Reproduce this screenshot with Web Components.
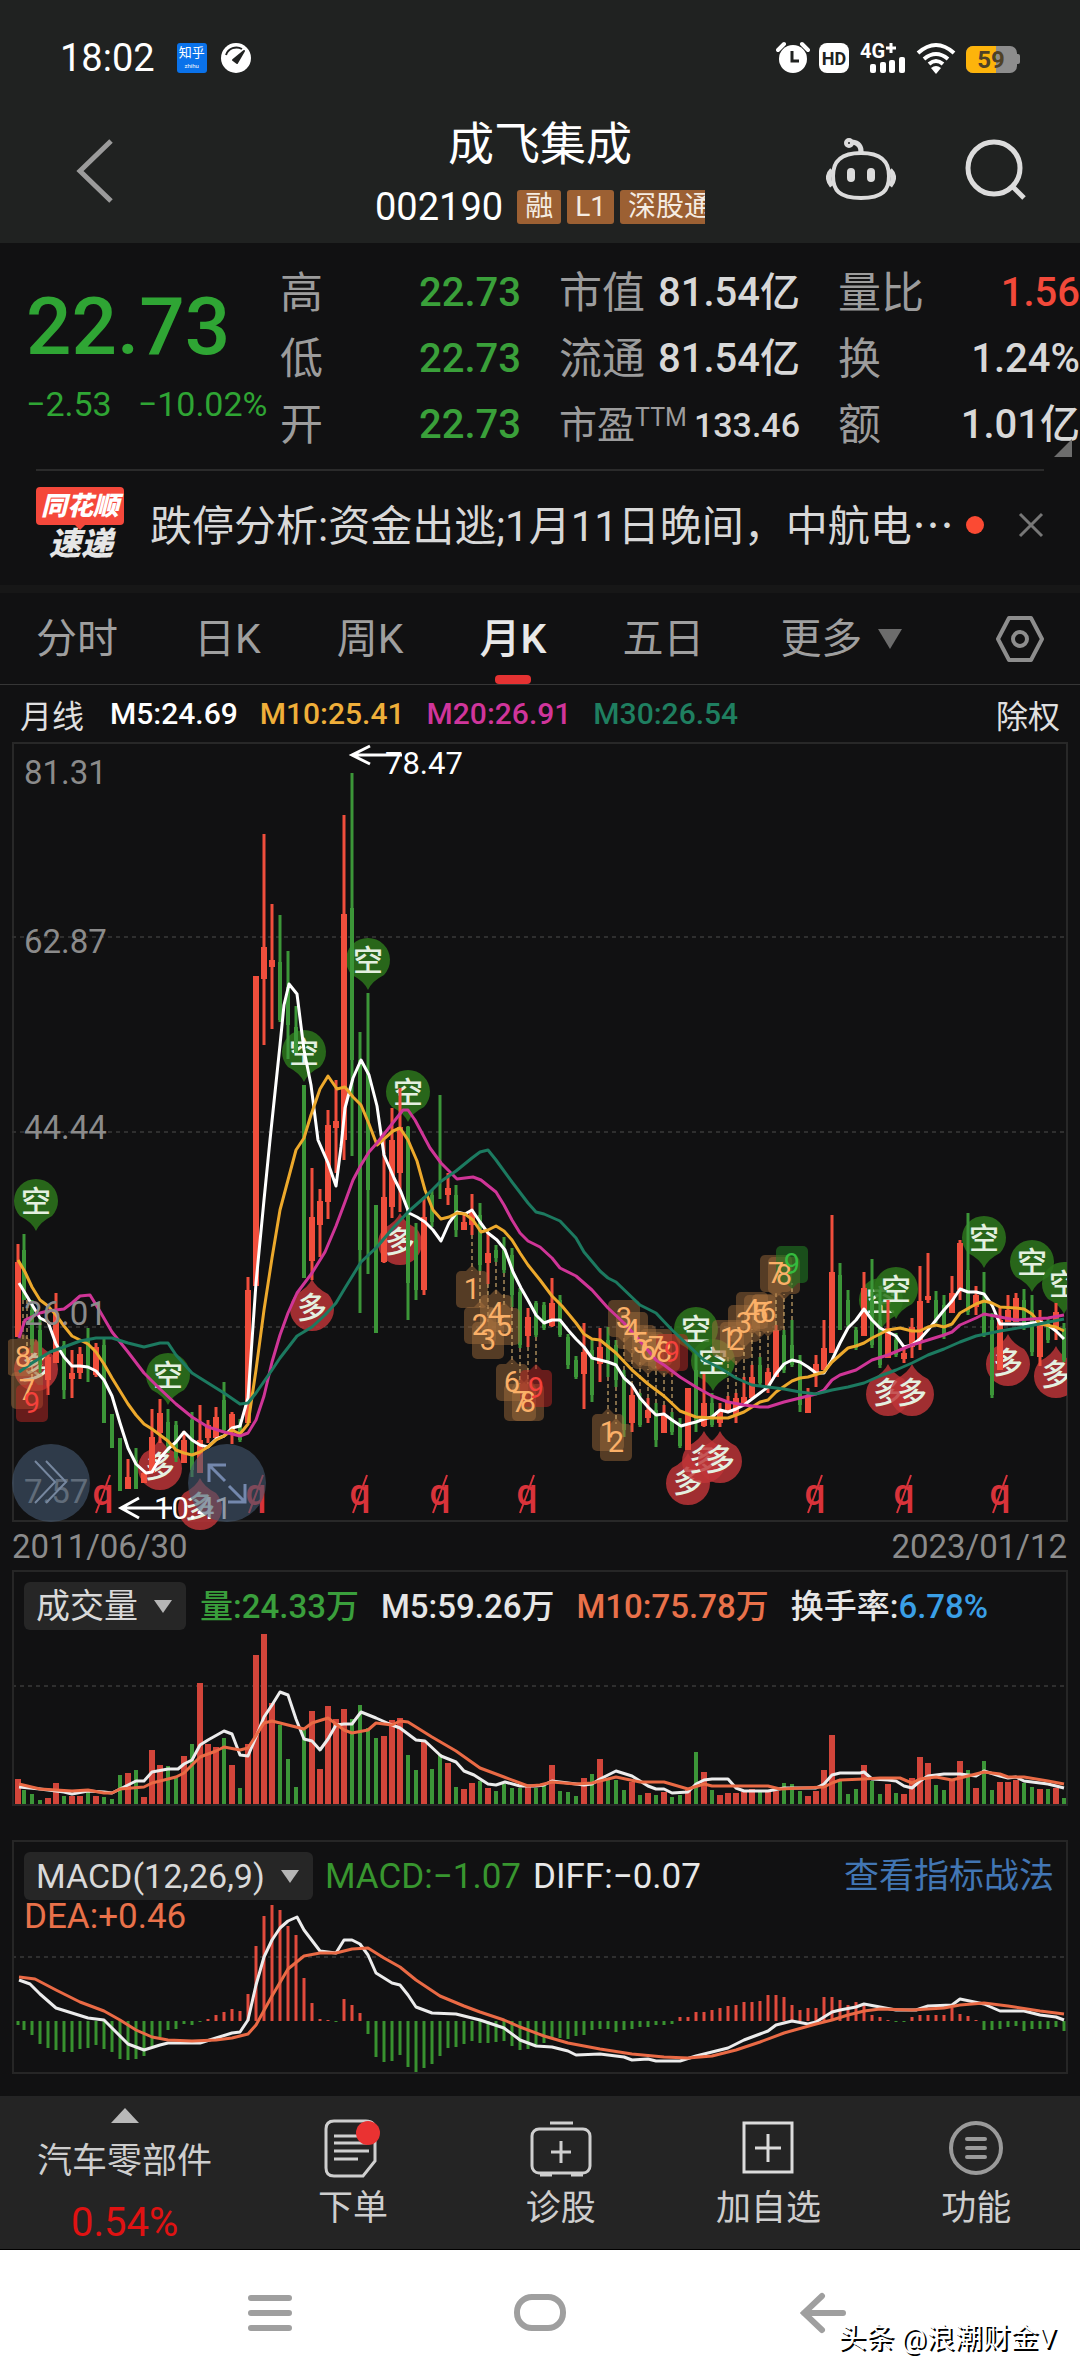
<!DOCTYPE html>
<html lang="zh-CN">
<head>
<meta charset="utf-8">
<meta name="viewport" content="width=device-width, initial-scale=1">
<title>成飞集成 002190</title>
<style>
  body {
    margin: 0;
    background: #111112;
    color: #d8d8d8;
    font-family: Roboto, "Noto Sans CJK SC", sans-serif;
  }
</style>
</head>
<body>
<stock-page></stock-page>

<script>
const RESET = `
  * { box-sizing: border-box; }
  h1, button, select { margin: 0; padding: 0; }
  button, select { font: inherit; color: inherit; background: none; border: 0; cursor: pointer; }
  a { color: inherit; text-decoration: none; }
  svg { display: block; }
`;

class BaseElement extends HTMLElement {
  connectedCallback() {
    if (this.shadowRoot) return;
    this.attachShadow({ mode: 'open' });
    this.shadowRoot.innerHTML = `<style>${RESET}${this.styles()}</style>${this.render()}`;
  }
  styles() { return ':host { display: block; }'; }
  render() { return '<slot></slot>'; }
}

/* ---------- status bar ---------- */
class StatusBar extends BaseElement {
  styles() {
    return `
      :host { display: flex; justify-content: space-between; align-items: center;
        height: 116px; padding: 0 60px; background: #202221; color: #fff; }
      .side { display: flex; align-items: center; gap: 14px; }
      .time { font-size: 38px; line-height: 48px; margin-right: 8px; }
      .app { width: 30px; height: 30px; border-radius: 3px; background: #0a72ea;
        font-size: 13px; line-height: 20px; text-align: center; }
      .app small { display: block; font-size: 6px; line-height: 6px; }
      text { font-family: Roboto, sans-serif; font-weight: 700; }
    `;
  }
  render() {
    return `
      <div class="side">
        <span class="time">18:02</span>
        <span class="app">知乎<small>zhihu</small></span>
        <svg width="30" height="30" viewBox="0 0 30 30">
          <circle cx="15" cy="15" r="15" fill="#fff"/>
          <path d="M5 12a11 11 0 0 1 16-6" fill="none" stroke="#202221" stroke-width="2"/>
          <path d="M23 8l-7 12-4-3z" fill="#202221" stroke="#202221" stroke-width="2" stroke-linejoin="round"/>
        </svg>
      </div>
      <svg width="244" height="48" viewBox="0 -8 244 48">
        <g fill="#fff">
          <circle cx="17" cy="17" r="14"/>
          <path d="M2 8l6-6M32 8l-6-6" stroke="#fff" stroke-width="4" stroke-linecap="round"/>
          <path d="M16 9v10h7" fill="none" stroke="#202221" stroke-width="3"/>
          <rect x="43" y="1" width="30" height="30" rx="8"/>
          <text x="58" y="23" text-anchor="middle" font-size="18" fill="#202221">HD</text>
          <text x="84" y="16" font-size="20">4G</text>
          <path d="M110 6h10M115 1v10" stroke="#fff" stroke-width="3"/>
          <rect x="94" y="22" width="6" height="9" rx="2"/>
          <rect x="104" y="20" width="6" height="11" rx="2"/>
          <rect x="113" y="18" width="6" height="13" rx="2"/>
          <rect x="123" y="15" width="6" height="16" rx="2"/>
          <path d="M142 11q18-16 36 0M148 17q12-10 24 0M153 22q7-6 14 0" fill="none" stroke="#fff" stroke-width="4"/>
          <path d="M155 26q5-4 10 0l-5 6z"/>
          <rect x="190" y="4" width="51" height="27" rx="7" fill="#8d8d8d"/>
          <path d="M197 4h23v27h-23a7 7 0 0 1-7-7V11a7 7 0 0 1 7-7z" fill="#fdb40b"/>
          <path d="M241 12h1a2 2 0 0 1 2 2v6a2 2 0 0 1-2 2h-1z" fill="#8d8d8d"/>
          <text x="215" y="26" text-anchor="middle" font-size="24" fill="#4f4126">59</text>
        </g>
      </svg>
    `;
  }
}

/* ---------- title bar ---------- */
class StockHeader extends BaseElement {
  styles() {
    return `
      :host { display: grid; grid-template-columns: 1fr 330px 1fr; align-items: start;
        height: 127px; padding: 0 54px; background: #202221; color: #fff; }
      .title { text-align: center; }
      h1 { font-size: 46px; line-height: 56px; font-weight: 400; }
      .code { display: flex; align-items: center; gap: 6px; overflow: hidden;
        font-size: 38px; line-height: 70px; white-space: nowrap; }
      .code span { margin-right: 8px; }
      ::slotted(i) { flex: none; padding: 0 8px; font-style: normal; font-size: 28px; line-height: 34px;
        border-radius: 3px; background: #9c6033; color: #f5ece2; }
      .back { padding: 22px 0 0 20px; }
      .right { display: flex; justify-content: flex-end; gap: 68px; padding-top: 20px; }
    `;
  }
  render() {
    return `
      <button class="back" aria-label="返回"><svg width="44" height="66" viewBox="0 0 44 66">
        <path d="M37 3L6 33l31 30" fill="none" stroke="#9b9b9b" stroke-width="5"/></svg></button>
      <div class="title">
        <h1>${this.getAttribute('name')}</h1>
        <div class="code"><span>${this.getAttribute('code')}</span><slot></slot></div>
      </div>
      <div class="right">
        <button aria-label="智能助手"><svg width="70" height="66" viewBox="0 0 70 66" fill="none" stroke="#dcdcdc" stroke-width="4">
          <path d="M35 17C56 17 63 26 63 40S57 62 35 62 7 54 7 40s7-23 28-23z"/>
          <path d="M6 34q-7 7 0 16M64 34q7 7 0 16" stroke-width="5"/>
          <path d="M35 17q1-10-9-11" stroke-width="5"/><circle cx="23" cy="7" r="3"/>
          <path d="M25 36v6M45 36v6" stroke-width="8" stroke-linecap="round"/></svg></button>
        <button aria-label="搜索"><svg width="62" height="66" viewBox="0 0 62 66" fill="none" stroke="#dcdcdc" stroke-width="5">
          <circle cx="30" cy="32" r="26"/><path d="M48 50l12 12"/></svg></button>
      </div>
    `;
  }
}

/* ---------- quote ---------- */
class QuoteItem extends BaseElement {
  styles() {
    return `
      :host { display: flex; justify-content: space-between; align-items: center; white-space: nowrap;
        font-size: 40px; line-height: 66px; }
      .label { font-size: 43px; color: #9c9c9c; }
      .value { font-weight: 500; }
      :host([color=green]) .value { color: #3aa03a; }
      :host([color=red]) .value { color: #f2493a; }
      :host([small]) { font-size: 34px; }
      :host([small]) .label { font-size: 38px; }
    `;
  }
  render() {
    return `<span class="label"><slot name="label"></slot></span><span class="value"><slot></slot></span>`;
  }
}

class QuotePanel extends BaseElement {
  styles() {
    return `
      :host { display: grid; grid-template-columns: 216px 241px 241px 1fr; column-gap: 38px;
        height: 226px; padding: 17px 0 0 26px; position: relative; }
      .now { color: #2fa534; font-weight: 500; }
      .price { font-size: 80px; line-height: 94px; margin-top: 20px; }
      .diff { display: flex; gap: 26px; font-size: 34px; line-height: 48px; font-weight: 400; white-space: nowrap; margin-top: 6px; }
      sup { font-size: 25px; line-height: 25px; vertical-align: 12px; }
      .corner { position: absolute; right: 8px; bottom: 12px; }
    `;
  }
  render() {
    return `
      <div class="now">
        <div class="price">22.73</div>
        <div class="diff"><span>−2.53</span><span>−10.02%</span></div>
      </div>
      <div>
        <quote-item color="green"><span slot="label">高</span>22.73</quote-item>
        <quote-item color="green"><span slot="label">低</span>22.73</quote-item>
        <quote-item color="green"><span slot="label">开</span>22.73</quote-item>
      </div>
      <div>
        <quote-item><span slot="label">市值</span>81.54亿</quote-item>
        <quote-item><span slot="label">流通</span>81.54亿</quote-item>
        <quote-item small><span slot="label">市盈<sup>TTM</sup></span>133.46</quote-item>
      </div>
      <div>
        <quote-item color="red"><span slot="label">量比</span>1.56</quote-item>
        <quote-item><span slot="label">换</span>1.24%</quote-item>
        <quote-item><span slot="label">额</span>1.01亿</quote-item>
      </div>
      <svg class="corner" width="18" height="18"><path d="M18 0v18H0z" fill="#6d6d6d"/></svg>
    `;
  }
}

/* ---------- news strip ---------- */
class NewsStrip extends BaseElement {
  styles() {
    return `
      :host { display: flex; align-items: center; height: 116px; margin: 0 36px; padding-bottom: 6px;
        border-top: 2px solid #2b2b2b; }
      .badge { position: relative; width: 90px; text-align: center; font-style: italic; font-weight: 900; }
      .badge b { display: block; background: #f5483b; color: #fff; border-radius: 4px; margin-right: 2px;
        font-size: 26px; line-height: 38px; }
      .badge em { display: block; color: #e6e6e6; font-size: 32px; line-height: 38px; }
      .badge svg { position: absolute; left: 38px; top: 37px; }
      a { flex: 1; min-width: 0; margin-left: 24px; font-size: 42px; line-height: 60px;
        white-space: nowrap; }
      .more { font-family: "Noto Sans CJK SC", sans-serif; }
      .dot { flex: none; width: 18px; height: 18px; border-radius: 50%; background: #fb4a33; margin-right: 34px; }
    `;
  }
  render() {
    return `
      <div class="badge"><b>同花顺</b><svg width="12" height="6"><path d="M0 0h12L6 6z" fill="#f5483b"/></svg><em>速递</em></div>
      <a href="#news"><slot></slot><span class="more">…</span></a>
      <span class="dot"></span>
      <button aria-label="关闭"><svg width="26" height="26"><path d="M2 2l22 22M24 2L2 24" stroke="#777" stroke-width="3"/></svg></button>
    `;
  }
}

/* ---------- period tabs ---------- */
class PeriodTabs extends BaseElement {
  styles() {
    return `
      :host { display: flex; align-items: stretch; gap: 76px; height: 100px; padding: 0 36px;
        border-top: 8px solid #171717; border-bottom: 1px solid #363636; color: #9f9f9f; }
      button { position: relative; font-size: 41px; line-height: 60px; white-space: nowrap; }
      .on { color: #e8e8e8; font-weight: 500; }
      .on::after { content: ''; position: absolute; left: 50%; bottom: 0; width: 36px; height: 9px;
        margin-left: -18px; border-radius: 4px; background: #e53232; }
      .more { display: flex; align-items: center; gap: 16px; }
      .set { margin-left: auto; }
    `;
  }
  render() {
    const tab = (t, on) => `<button${on ? ' class="on" aria-current="true"' : ''}>${t}</button>`;
    return `
      ${tab('分时')}${tab('日K')}${tab('周K')}${tab('月K', true)}${tab('五日')}
      <button class="more">更多<svg width="24" height="20"><path d="M0 0h24L12 20z" fill="#6c6c6c"/></svg></button>
      <button class="set" aria-label="设置"><svg width="48" height="48" viewBox="0 0 48 48" fill="none" stroke="#8d8d8d" stroke-width="4">
        <path d="M13 3h22l11 21-11 21H13L2 24z" stroke-linejoin="round"/><circle cx="24" cy="24" r="7"/></svg></button>
    `;
  }
}

class MaLegend extends BaseElement {
  styles() {
    return `
      :host { display: flex; align-items: center; gap: 22px; height: 57px; padding: 0 20px;
        font-size: 30px; font-weight: 500; white-space: nowrap; }
      .plain { font-size: 32px; font-weight: 400; color: #e0e0e0; }
      .start { margin-right: 4px; }
      .end { margin-left: auto; }
    `;
  }
  render() {
    return `
      <span class="plain start">月线</span>
      <span style="color:#fff">M5:24.69</span>
      <span style="color:#efaf3a">M10:25.41</span>
      <span style="color:#d0359b">M20:26.91</span>
      <span style="color:#1f7f60">M30:26.54</span>
      <span class="plain end">除权</span>
    `;
  }
}

/* ---------- chart data: one entry per month ---------- */
const x = (i) => 16 + i * 8 + (i === 0 ? 2 : 0);
const RED = '#f04e3c';
const GREEN = '#3c9638';

// colour, high, body top, body bottom, low
const CANDLES = `
r 1244 1262 1337 1337|g 1234 1250 1300 1300|g 1300 1310 1345 1353|g 1318 1330 1365 1373|r 1353 1357 1380 1395|r 1293 1313 1363 1363
g 1341 1345 1390 1399|r 1350 1373 1379 1398|r 1347 1354 1373 1379|g 1328 1340 1366 1382|r 1343 1347 1375 1377|g 1337 1345 1423 1423
g 1414 1414 1448 1448|g 1438 1438 1491 1491|r 1459 1477 1489 1489|g 1448 1460 1489 1489|r 1470 1473 1483 1483|r 1409 1437 1473 1473
r 1399 1413 1433 1443|g 1409 1422 1446 1453|g 1421 1425 1458 1462|r 1431 1440 1463 1463|g 1412 1420 1470 1477|r 1405 1440 1473 1473
r 1420 1425 1438 1443|r 1407 1417 1438 1438|g 1382 1400 1430 1433|r 1412 1414 1430 1444|g 1419 1425 1440 1442|r 1277 1290 1423 1423
r 976 976 1286 1286|r 834 947 979 1045|r 904 960 967 1029|g 915 962 1020 1022|g 951 987 1025 1059|g 1006 1027 1053 1053
g 1085 1085 1278 1278|r 1168 1217 1261 1280|r 1189 1201 1225 1257|r 1110 1125 1202 1219|r 1080 1121 1128 1173|r 815 914 1140 1160
g 773 908 1060 1156|g 1032 1060 1250 1313|g 993 1073 1190 1274|g 1205 1205 1333 1333|r 1140 1197 1262 1263|r 1108 1140 1207 1218
r 1088 1127 1173 1212|g 1126 1127 1283 1320|g 1223 1240 1290 1300|r 1197 1217 1290 1295|g 1190 1195 1222 1227|g 1095 1199 1199 1199
r 1173 1188 1195 1205|g 1185 1195 1230 1237|r 1213 1222 1230 1230|r 1194 1212 1225 1235|g 1203 1215 1265 1271|r 1233 1253 1263 1284
g 1245 1250 1258 1262|g 1237 1250 1270 1273|g 1248 1255 1295 1307|g 1288 1292 1345 1348|r 1308 1317 1336 1347|g 1301 1303 1335 1337
g 1302 1305 1328 1330|r 1278 1303 1326 1327|g 1295 1300 1335 1337|g 1334 1337 1365 1369|g 1356 1360 1377 1379|r 1323 1352 1374 1409
g 1340 1350 1395 1402|r 1328 1347 1364 1382|g 1327 1340 1360 1377|g 1340 1345 1380 1387|g 1370 1375 1430 1437|r 1385 1395 1423 1432
g 1393 1398 1425 1427|r 1398 1410 1418 1423|g 1403 1410 1440 1447|r 1405 1415 1433 1433|g 1412 1418 1432 1435|g 1418 1425 1446 1448
r 1388 1388 1450 1450|g 1353 1370 1420 1432|r 1374 1403 1426 1427|g 1393 1403 1425 1427|r 1403 1412 1423 1427|r 1396 1402 1412 1412
r 1393 1398 1415 1423|r 1377 1397 1403 1403|r 1365 1377 1398 1398|g 1357 1365 1383 1387|r 1368 1372 1387 1393|r 1325 1330 1377 1377
g 1330 1335 1370 1373|g 1320 1345 1365 1367|g 1355 1360 1405 1412|r 1388 1397 1413 1413|r 1355 1364 1374 1387|r 1320 1348 1370 1370
r 1215 1272 1353 1353|g 1263 1275 1330 1330|g 1290 1300 1325 1327|g 1327 1330 1348 1350|r 1272 1288 1336 1336|g 1259 1300 1345 1348
g 1290 1320 1365 1368|r 1300 1328 1358 1358|g 1333 1340 1355 1357|r 1345 1353 1359 1363|r 1318 1327 1347 1358|r 1266 1301 1340 1350
r 1253 1296 1300 1303|g 1291 1300 1320 1323|g 1295 1305 1335 1339|r 1276 1293 1313 1313|r 1240 1243 1290 1300|g 1213 1270 1312 1315
r 1286 1295 1307 1315|g 1272 1300 1335 1337|g 1313 1320 1395 1398|r 1307 1320 1370 1370|r 1295 1310 1322 1322|r 1293 1298 1322 1322
g 1289 1300 1328 1330|g 1295 1310 1352 1356|r 1310 1320 1357 1366|g 1317 1322 1340 1343|r 1303 1312 1330 1340|g 1323 1328 1360 1362
`.trim().split(/[|\n]/).map((s) => s.split(' ').map((v, i) => (i ? +v : v)));

const VOLUME = [25, 14, 10, 4, 6, 21, 8, 8, 8, 12, 8, 7, 5, 29, 31, 34, 7, 54, 39, 38, 28, 48, 60, 121, 60, 57, 66, 39, 16, 60,
  149, 170, 101, 79, 45, 17, 74, 93, 35, 98, 85, 95, 85, 99, 76, 66, 68, 84, 86, 49, 34, 62, 35, 50, 41, 17, 15, 21, 23, 16,
  13, 20, 16, 16, 17, 16, 18, 39, 13, 12, 8, 26, 30, 45, 24, 24, 14, 22, 9, 11, 9, 12, 7, 9, 14, 52, 32, 14, 9, 11,
  11, 12, 15, 12, 12, 13, 21, 20, 13, 8, 13, 34, 69, 24, 10, 15, 39, 23, 10, 20, 11, 10, 26, 47, 41, 19, 14, 25, 43, 34,
  16, 43, 14, 22, 22, 24, 21, 17, 15, 15, 16, 6];

const MACD = [-4, -9, -14, -23, -27, -29, -31, -31, -28, -27, -24, -28, -31, -38, -39, -38, -35, -25, -16, -9, -8, -3, -4, -1,
  2, 6, 9, 12, 10, 27, 75, 105, 116, 111, 95, 86, 43, 18, 2, 1, -1, 22, 16, 8, -13, -36, -41, -40, -34, -46, -52, -47, -43,
  -35, -27, -26, -23, -20, -22, -22, -21, -20, -25, -29, -28, -25, -22, -18, -17, -18, -15, -14, -9, -8, -8, -11, -9, -8, -6,
  -6, -4, -4, -3, 4, 4, 9, 9, 11, 13, 15, 16, 19, 19, 20, 26, 26, 24, 16, 11, 13, 13, 24, 24, 21, 16, 19, 16, 6, 4, 1, -1,
  -1, 4, 6, 6, 6, 6, 13, 7, 5, 1, -9, -9, -8, -6, -5, -10, -8, -8, -8, -6, -10];

const line = (points, color, w = 3) =>
  `<polyline points="${points}" fill="none" stroke="${color}" stroke-width="${w}" stroke-linejoin="round"/>`;
const dashed = (y) => `<path d="M12 ${y}H1067" stroke="#2f2f2f" stroke-width="2" stroke-dasharray="4 4"/>`;

/* ---------- candlestick chart ---------- */
const SHORTS = [[36, 1202], [168, 1376], [304, 1053], [368, 961], [408, 1093], [696, 1330], [713, 1362],
  [881, 1301], [896, 1290], [984, 1239], [1032, 1263], [1064, 1285]];
const LONGS = [[36, 1368], [160, 1467], [200, 1507], [312, 1308], [400, 1242], [688, 1482], [704, 1460], [720, 1460],
  [888, 1393], [912, 1393], [1008, 1363], [1056, 1375]];
// x, y, count, side of the candle, tone
const COUNTS = [[23, 1357, 8, 'below'], [27, 1390, 7, 'below'], [32, 1403, 9, 'below', 'red'],
  [472, 1289, 1, 'below'], [480, 1325, 2, 'below'], [488, 1340, 3, 'below'], [496, 1313, 4, 'below'], [504, 1326, 5, 'below'],
  [512, 1382, 6, 'below'], [520, 1402, 7, 'below'], [528, 1402, 8, 'below'], [536, 1388, 9, 'below', 'red'],
  [608, 1432, 1, 'below'], [616, 1442, 2, 'below'],
  [624, 1318, 3, 'above'], [632, 1330, 4, 'above'], [640, 1343, 5, 'above'], [648, 1350, 6, 'above'],
  [656, 1347, 7, 'above'], [664, 1352, 8, 'above'], [672, 1352, 9, 'above', 'red'],
  [728, 1338, 1, 'above'], [736, 1340, 2, 'above'], [744, 1323, 3, 'above'], [752, 1310, 4, 'above'],
  [760, 1313, 5, 'above'], [768, 1312, 6, 'above'],
  [776, 1273, 7, 'above'], [784, 1275, 8, 'above'], [792, 1264, 9, 'above', 'green']];
const TONES = {
  plain: ['rgba(168, 112, 62, .45)', '#fbb068'],
  red: ['rgba(190, 40, 36, .5)', '#f5413c'],
  green: ['rgba(34, 120, 34, .6)', '#35bb3e'],
};

class KChart extends BaseElement {
  styles() {
    return `
      :host { display: block; position: relative; }
      svg.chart { width: 100%; height: auto; }
      text { font-family: Roboto, "Noto Sans CJK SC", sans-serif; }
      .axis { fill: #8b8b8b; font-size: 33px; }
      .note { fill: #fff; font-size: 31px; }
      .pin { font-size: 30px; font-weight: 500; text-anchor: middle; fill: #e4f0e0; }
      .num { font-size: 29px; text-anchor: middle; }
      button { position: absolute; bottom: 48px; width: 78px; height: 78px; border-radius: 50%;
        background: rgba(68, 88, 112, .6); }
      button svg { width: 78px; height: 78px; }
      .forward { left: 12px; }
      .expand { left: 188px; }
    `;
  }
  pin([cx, cy], up) {
    const fill = up ? 'rgba(192,52,56,.82)' : 'rgba(44,116,28,.86)';
    const tip = up
      ? `M${cx - 16} ${cy - 14}Q${cx - 4} ${cy - 20} ${cx} ${cy - 29}Q${cx + 4} ${cy - 20} ${cx + 16} ${cy - 14}A22 22 0 1 1 ${cx - 16} ${cy - 14}z`
      : `M${cx - 16} ${cy + 14}Q${cx - 4} ${cy + 20} ${cx} ${cy + 29}Q${cx + 4} ${cy + 20} ${cx + 16} ${cy + 14}A22 22 0 1 0 ${cx - 16} ${cy + 14}z`;
    return `<path d="${tip}" fill="${fill}"/><text class="pin" x="${cx}" y="${cy + 10}">${up ? '多' : '空'}</text>`;
  }
  countBox([cx, cy, , side, tone = 'plain']) {
    const below = side === 'below';
    const candle = CANDLES[Math.round((cx - 16) / 8)];
    const tip = below ? `M${cx - 6} ${cy - 18}l6-6 6 6z` : `M${cx - 6} ${cy + 19}l6 6 6-6z`;
    return `<path d="M${cx} ${below ? candle[4] : candle[1]}V${below ? cy - 18 : cy + 19}" stroke="#f2c67c" stroke-dasharray="4 3"/>
      <rect x="${cx - 16}" y="${cy - 18}" width="32" height="37" rx="5" fill="${TONES[tone][0]}"/>
      <path d="${tip}" fill="${TONES[tone][0]}"/>`;
  }
  countText([cx, cy, n, , tone = 'plain']) {
    return `<text class="num" x="${cx}" y="${cy + 10}" fill="${TONES[tone][1]}">${n}</text>`;
  }
  render() {
    const candles = CANDLES.map(([k, h, t, b, l], i) => {
      const c = k === 'r' ? RED : GREEN;
      const w = k === 'r' ? 6 : 4;
      return `<path d="M${x(i)} ${h}V${l}" stroke="${c}" stroke-width="3"/><path d="M${x(i)} ${t}V${b}" stroke="${c}" stroke-width="${w}"/>`;
    }).join('');
    const rights = [103, 256, 360, 440, 527, 815, 904, 1000].map((cx) =>
      `<text x="${cx}" y="1505" text-anchor="middle" font-size="37" font-weight="500" fill="#d9333a">q</text><path d="M${cx - 7} 1513L${cx + 7} 1475" stroke="#d9333a" stroke-width="2"/>`).join('');
    return `
      <svg class="chart" viewBox="0 742 1080 828" role="img" aria-label="月K线">
        <defs><clipPath id="frame"><path d="M8 742H1067V1560H8z"/></clipPath></defs>
        <path d="M13 743H1067V1521H13z" fill="none" stroke="#282828" stroke-width="2"/>
        ${dashed(937)}${dashed(1132)}${dashed(1327)}
        ${rights}
        <g clip-path="url(#frame)">
          ${SHORTS.map((p) => this.pin(p, false)).join('')}
          ${LONGS.map((p) => this.pin(p, true)).join('')}
          ${candles}
          ${COUNTS.map(this.countBox).join('')}
          ${line('19,1283 28,1298 40,1318 48,1322 56,1344 64,1357 72,1366 80,1366 88,1367 96,1371 104,1380 112,1396 120,1423 128,1448 136,1464 146,1473 152,1472 160,1458 168,1449 176,1442 184,1432 192,1440 200,1445 208,1447 216,1439 224,1436 232,1428 240,1426 248,1398 256,1283 264,1200 270,1140 280,1045 284,1005 289,984 297,994 304,1050 311,1085 318,1140 328,1163 336,1186 341,1147 345,1108 353,1078 361,1060 369,1075 377,1106 384,1155 394,1178 401,1192 409,1213 417,1217 425,1222 433,1230 441,1241 449,1223 457,1212 465,1214 472,1210 480,1222 488,1233 497,1240 505,1250 513,1272 521,1288 529,1302 536,1315 544,1323 552,1320 560,1320 568,1330 576,1339 584,1347 592,1358 600,1360 608,1362 616,1365 624,1378 632,1385 640,1398 648,1407 656,1415 664,1414 672,1420 681,1426 688,1424 696,1422 704,1419 712,1417 720,1410 728,1412 736,1409 744,1405 752,1399 760,1393 768,1387 776,1374 784,1364 792,1360 800,1362 808,1367 816,1373 824,1373 832,1360 840,1343 848,1328 856,1320 864,1309 872,1320 880,1328 888,1332 896,1336 904,1347 912,1345 920,1339 928,1330 936,1320 944,1310 952,1301 960,1289 968,1292 976,1292 984,1294 992,1305 1000,1324 1024,1324 1040,1322 1048,1325 1056,1331 1064,1339', '#fff')}
          ${line('18,1260 25,1272 32,1287 40,1300 48,1306 56,1315 64,1326 72,1336 88,1344 96,1352 104,1364 112,1378 120,1391 128,1404 136,1415 144,1424 152,1429 160,1435 168,1441 176,1450 184,1453 192,1455 200,1452 208,1447 216,1440 224,1436 232,1430 240,1434 248,1424 256,1370 264,1310 272,1258 280,1210 288,1180 296,1150 304,1138 311,1115 320,1089 328,1076 337,1089 345,1087 353,1097 361,1105 369,1124 377,1145 385,1138 393,1131 400,1128 408,1140 417,1161 425,1190 433,1210 441,1219 449,1217 457,1213 465,1214 473,1220 481,1232 488,1230 496,1226 504,1231 512,1240 520,1253 528,1265 540,1280 552,1296 562,1306 576,1323 584,1334 592,1339 600,1340 616,1353 632,1370 648,1384 664,1396 680,1411 696,1417 712,1418 728,1418 744,1412 760,1402 768,1400 776,1392 792,1381 800,1378 808,1377 824,1372 832,1362 848,1348 856,1346 864,1343 872,1338 888,1330 900,1328 912,1331 920,1331 928,1327 936,1325 944,1327 952,1324 960,1313 976,1304 984,1301 992,1303 1000,1307 1016,1308 1024,1309 1032,1314 1040,1324 1056,1327 1064,1331', '#eda92c')}
          ${line('19,1338 25,1320 40,1313 48,1311 64,1309 72,1303 80,1296 90,1295 98,1308 112,1332 128,1352 144,1373 160,1389 176,1404 192,1417 208,1427 224,1432 240,1436 248,1433 256,1420 264,1396 272,1362 280,1335 288,1313 297,1293 312,1273 325,1252 336,1226 345,1202 353,1180 361,1165 369,1152 377,1143 403,1110 408,1110 415,1120 430,1148 441,1163 457,1179 465,1178 473,1177 481,1180 496,1192 504,1205 512,1220 520,1233 528,1241 540,1247 552,1258 560,1268 576,1276 592,1290 608,1308 624,1323 640,1341 656,1360 664,1365 680,1377 696,1387 712,1396 728,1402 744,1405 760,1407 768,1407 784,1402 800,1398 816,1394 824,1390 832,1380 840,1375 856,1370 872,1360 888,1355 912,1345 928,1340 944,1335 952,1332 960,1325 976,1318 984,1314 1000,1317 1016,1320 1048,1318 1064,1315', '#cf3597')}
          ${line('19,1372 32,1363 50,1352 64,1347 80,1341 96,1338 112,1338 128,1343 144,1347 160,1343 168,1343 176,1355 192,1373 208,1383 224,1393 240,1404 248,1403 256,1393 272,1370 280,1358 297,1336 312,1327 325,1315 336,1303 345,1288 361,1262 377,1247 393,1228 409,1211 425,1197 440,1182 456,1171 472,1158 480,1152 488,1150 496,1160 512,1182 528,1203 536,1212 544,1214 560,1221 576,1238 584,1252 600,1271 608,1278 616,1282 640,1305 656,1313 672,1330 688,1345 704,1360 720,1368 736,1378 752,1385 768,1387 784,1389 800,1392 816,1394 832,1390 848,1387 864,1383 880,1376 896,1370 912,1363 928,1355 944,1349 960,1342 976,1336 1000,1331 1024,1327 1064,1319', '#1c7a60')}
          ${COUNTS.map(this.countText).join('')}
        </g>
        <text class="axis" x="24" y="784">81.31</text>
        <text class="axis" x="24" y="953">62.87</text>
        <text class="axis" x="24" y="1139">44.44</text>
        <text class="axis" x="24" y="1325">26.01</text>
        <text class="axis" x="24" y="1503">7.57</text>
        <text class="note" x="385" y="774">78.47</text>
        <path d="M402 755H353M370 746L352 755l18 9" fill="none" stroke="#fff" stroke-width="3"/>
        <text class="note" x="154" y="1519">10.41</text>
        <path d="M172 1508H122M139 1498L121 1508l18 10" fill="none" stroke="#fff" stroke-width="3"/>
        <text class="axis" x="12" y="1558">2011/06/30</text>
        <text class="axis" x="1067" y="1558" text-anchor="end">2023/01/12</text>
      </svg>
      <button class="forward" aria-label="快进"><svg viewBox="0 0 78 78" fill="none" stroke="#76879f" stroke-width="2">
        <path d="M23 17l20 21-20 21M34 17l20 21-20 21"/></svg></button>
      <button class="expand" aria-label="展开"><svg viewBox="0 0 78 78" fill="none" stroke="#7488ad" stroke-width="3">
        <path d="M21 38V21h17M21 21l16 16M57 40v18H40M57 58L41 42"/></svg></button>
    `;
  }
}

/* ---------- indicator panels ---------- */
const PANEL = `
  :host { display: grid; margin: 0 12px; border: 2px solid #262626; }
  .row, .chart { grid-area: 1 / 1; }
  .chart { width: 100%; height: auto; align-self: end; }
  .row { position: relative; display: flex; flex-wrap: wrap; align-items: center; align-content: flex-start;
    padding: 10px 10px 0; font-size: 33px; line-height: 48px; font-weight: 500; white-space: nowrap; }
  .pick { position: relative; display: block; }
  .pick select { appearance: none; height: 48px; padding: 0 48px 0 12px; border-radius: 6px;
    background: #262626; color: #d9d9d9; font-size: 34px; font-weight: 400; line-height: 48px; }
  .pick svg { position: absolute; right: 14px; top: 18px; pointer-events: none; }
`;
const arrow = '<svg width="18" height="13"><path d="M0 0h18L9 13z" fill="#b5b5b5"/></svg>';

class VolumePanel extends BaseElement {
  styles() {
    return PANEL + '.row { column-gap: 22px; } .pick { margin-right: -8px; }';
  }
  render() {
    const bars = VOLUME.map((v, i) => {
      const red = CANDLES[i][0] === 'r';
      return `<path d="M${x(i)} 1805v-${v}" stroke="${red ? '#d2453a' : GREEN}" stroke-width="${red ? 6 : 4}"/>`;
    }).join('');
    return `
      <svg class="chart" viewBox="14 1573 1052 232" role="img" aria-label="成交量">
        ${dashed(1687)}${bars}
        ${line('19,1788 40,1790 64,1793 72,1795 88,1792 104,1793 112,1794 120,1790 128,1786 136,1782 144,1782 152,1773 168,1770 178,1770 184,1765 192,1761 200,1746 208,1741 224,1732 232,1735 240,1756 248,1757 256,1738 264,1718 272,1706 280,1693 288,1696 296,1720 304,1740 312,1742 320,1751 328,1740 336,1726 344,1725 352,1725 361,1713 376,1719 392,1726 400,1729 416,1741 425,1742 441,1757 456,1763 464,1772 474,1776 488,1785 496,1786 505,1783 520,1787 536,1787 544,1786 552,1782 568,1784 584,1786 592,1785 600,1780 616,1772 632,1777 648,1787 656,1790 664,1790 672,1794 688,1793 696,1785 704,1781 712,1780 728,1780 736,1789 744,1792 768,1792 784,1789 816,1789 824,1785 832,1776 840,1774 860,1774 864,1773 872,1780 888,1781 896,1782 904,1787 912,1789 920,1782 928,1777 944,1775 960,1775 976,1777 984,1772 1000,1777 1008,1779 1016,1778 1024,1782 1048,1785 1064,1789', '#ececec')}
        ${line('19,1785 40,1790 72,1792 88,1791 104,1794 112,1794 120,1790 144,1788 152,1784 176,1778 184,1774 200,1758 216,1752 224,1748 240,1751 248,1749 264,1724 272,1722 288,1726 304,1730 312,1724 328,1719 344,1731 352,1734 368,1731 376,1724 392,1726 400,1722 408,1723 432,1738 456,1752 480,1769 504,1778 528,1787 540,1786 552,1783 576,1785 592,1784 608,1780 616,1778 640,1783 664,1783 688,1790 704,1785 712,1787 768,1787 780,1790 824,1788 832,1784 840,1781 864,1780 880,1779 900,1779 912,1784 920,1780 936,1778 952,1781 968,1777 984,1773 1000,1775 1008,1778 1024,1778 1048,1782 1064,1785', '#ea6a45')}
      </svg>
      <div class="row">
        <label class="pick"><select aria-label="指标"><option>成交量</option></select>${arrow}</label>
        <span style="color:#3a9f3c">量:24.33万</span>
        <span style="color:#e6e6e6">M5:59.26万</span>
        <span style="color:#e9714a">M10:75.78万</span>
        <span style="color:#e6e6e6">换手率:<span style="color:#3a9fe6">6.78%</span></span>
      </div>
    `;
  }
}

class MacdPanel extends BaseElement {
  styles() {
    return PANEL + `
      :host { margin-top: 34px; }
      .row { column-gap: 12px; font-size: 35px; font-weight: 400; }
      a { margin-left: auto; padding-right: 2px; color: #4276b4; }
      .dea { flex-basis: 100%; line-height: 32px; }
    `;
  }
  render() {
    const bars = MACD.map((v, i) => `<path d="M${x(i)} 2021V${2021 - v}" stroke="${v > 0 ? '#e04a3c' : '#38922f'}" stroke-width="3"/>`).join('');
    return `
      <svg class="chart" viewBox="14 1842 1052 230" role="img" aria-label="MACD">
        ${dashed(1957)}${bars}
        ${line('19,1980 30,1984 40,1994 56,2008 72,2013 88,2018 104,2020 112,2028 128,2044 144,2050 160,2045 168,2043 184,2043 200,2043 216,2038 232,2033 240,2032 248,2020 256,1985 264,1957 272,1940 280,1928 288,1921 297,1917 304,1930 320,1951 336,1953 344,1940 352,1940 360,1944 368,1955 376,1973 392,1983 400,1985 408,1995 416,2007 432,2013 456,2014 480,2020 504,2028 520,2040 536,2046 552,2047 568,2051 576,2055 600,2054 624,2057 632,2060 648,2059 656,2061 680,2061 696,2056 712,2052 728,2048 744,2040 760,2034 768,2031 776,2025 792,2021 808,2024 816,2022 832,2012 840,2010 856,2007 864,2004 880,2007 896,2010 916,2010 928,2006 952,2005 960,1999 984,2004 1000,2011 1024,2011 1040,2015 1056,2017 1064,2020', '#ececec')}
        ${line('19,1977 35,1979 56,1990 80,2002 104,2011 120,2020 136,2030 152,2037 168,2040 192,2041 216,2040 232,2038 248,2034 256,2025 272,1996 288,1969 304,1956 320,1953 336,1953 352,1949 368,1948 384,1958 400,1967 416,1980 440,1996 464,2006 480,2012 504,2020 520,2027 544,2036 568,2043 600,2049 632,2054 664,2057 688,2058 712,2056 736,2050 760,2042 784,2033 816,2024 832,2020 848,2015 864,2011 880,2009 912,2010 944,2008 960,2005 984,2003 1008,2006 1040,2011 1064,2014', '#ea6a45')}
      </svg>
      <div class="row">
        <label class="pick"><select aria-label="指标"><option>MACD(12,26,9)</option></select>${arrow}</label>
        <span style="color:#38962f">MACD:−1.07</span>
        <span style="color:#e8e8e8">DIFF:−0.07</span>
        <a href="#strategy">查看指标战法</a>
        <span class="dea" style="color:#e9714a">DEA:+0.46</span>
      </div>
    `;
  }
}

/* ---------- bottom toolbar ---------- */
class BottomBar extends BaseElement {
  styles() {
    return `
      :host { display: grid; grid-template-columns: 6fr 5fr 5fr 5fr 5fr; height: 154px; margin-top: 22px;
        background: #242424; color: #cecece; border-bottom: 1px solid #000; text-align: center; }
      button { display: flex; flex-direction: column; align-items: center; font-size: 35px; line-height: 50px;
        white-space: nowrap; padding-top: 22px; }
      button > svg { margin-bottom: 6px; }
      .board { padding-top: 12px; }
      .board svg { margin-bottom: 14px; }
      .board b { margin-top: 11px; font-size: 40px; font-weight: 400; color: #e01212; }
    `;
  }
  render() {
    return `
      <button class="board"><svg width="28" height="15"><path d="M0 15L14 0l14 15z" fill="#b9b9b9"/></svg>汽车零部件<b>0.54%</b></button>
      <button><svg width="62" height="60" viewBox="0 0 62 60" fill="none" stroke="#cfcfcf" stroke-width="3">
        <path d="M12 3h32q9 0 9 9v31L41 58H12q-8 0-8-8V11q0-8 8-8z"/><path d="M12 18h33M12 25h33M12 33h35M12 41h24"/>
        <circle cx="46" cy="15" r="12" fill="#ea3232" stroke="none"/></svg>下单</button>
      <button><svg width="62" height="60" viewBox="0 0 62 60" fill="none" stroke="#cfcfcf" stroke-width="3">
        <path d="M20 5h23"/><rect x="2" y="11" width="58" height="44" rx="7"/><path d="M10 57h12M41 57h12M31 23v22M21 34h20"/></svg>诊股</button>
      <button><svg width="54" height="60" viewBox="0 0 54 60" fill="none" stroke="#dcdcdc" stroke-width="3">
        <rect x="3" y="5" width="48" height="49"/><path d="M27 16v28M14 30h26"/></svg>加自选</button>
      <button><svg width="54" height="60" viewBox="0 0 54 60" fill="none" stroke="#9a9a9a" stroke-width="4">
        <circle cx="27" cy="30" r="25"/><path d="M18 21h18M18 30h18M18 39h18" stroke-linecap="round"/></svg>功能</button>
    `;
  }
}

class SystemNav extends BaseElement {
  styles() {
    return `
      :host { display: grid; grid-template-columns: 5fr 10fr 10fr 11fr 4fr; position: relative;
        height: 127px; background: #fff; }
      button { display: flex; align-items: center; justify-content: center; height: 126px; }
      button:first-of-type { grid-column: 2; }
      .mark { position: absolute; right: 24px; bottom: 18px; color: #fff; font-size: 28px; line-height: 40px;
        text-shadow: 2px 2px 0 #000; }
    `;
  }
  render() {
    return `
      <button aria-label="最近任务"><svg width="46" height="40" stroke="#9f9f9f" stroke-width="6" stroke-linecap="round">
        <path d="M4 5h38M4 20h38M4 35h38"/></svg></button>
      <button aria-label="主屏幕"><svg width="52" height="38"><rect x="3" y="3" width="46" height="31" rx="15" fill="none" stroke="#9f9f9f" stroke-width="6"/></svg></button>
      <button aria-label="返回"><svg width="48" height="42" fill="none" stroke="#9f9f9f" stroke-width="6" stroke-linecap="round">
        <path d="M4 21h39M22 4L4 21l18 17"/></svg></button>
      <span class="mark">头条 @浪潮财金V</span>
    `;
  }
}

class StockPage extends BaseElement {
  render() {
    return `
      <status-bar></status-bar>
      <stock-header name="成飞集成" code="002190"><i>融</i><i>L1</i><i>深股通</i></stock-header>
      <quote-panel></quote-panel>
      <news-strip>跌停分析:资金出逃;1月11日晚间，中航电</news-strip>
      <period-tabs></period-tabs>
      <ma-legend></ma-legend>
      <k-chart></k-chart>
      <volume-panel></volume-panel>
      <macd-panel></macd-panel>
      <bottom-bar></bottom-bar>
      <system-nav></system-nav>
    `;
  }
}

customElements.define('status-bar', StatusBar);
customElements.define('stock-header', StockHeader);
customElements.define('quote-item', QuoteItem);
customElements.define('quote-panel', QuotePanel);
customElements.define('news-strip', NewsStrip);
customElements.define('period-tabs', PeriodTabs);
customElements.define('ma-legend', MaLegend);
customElements.define('k-chart', KChart);
customElements.define('volume-panel', VolumePanel);
customElements.define('macd-panel', MacdPanel);
customElements.define('bottom-bar', BottomBar);
customElements.define('system-nav', SystemNav);
customElements.define('stock-page', StockPage);
</script>
</body>
</html>
